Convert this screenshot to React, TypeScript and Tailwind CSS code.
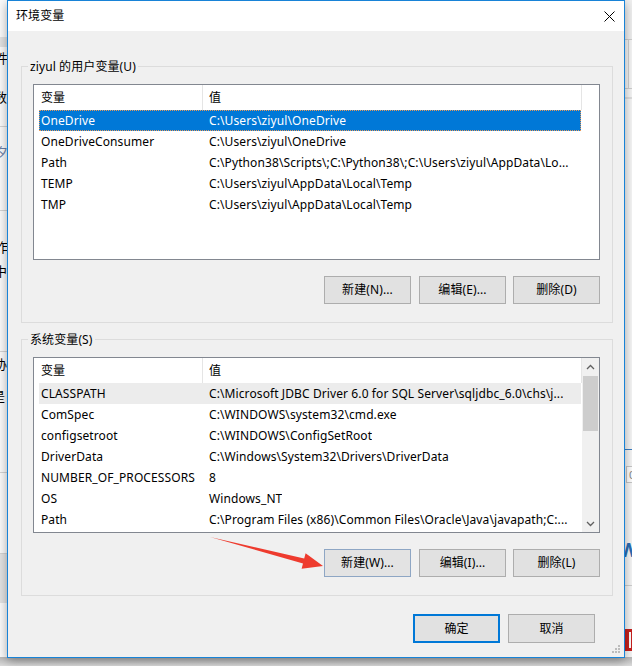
import React from "react";

type Row = { name: string; value: string };

const userRows: Row[] = [
  { name: "OneDrive", value: "C:\\Users\\ziyul\\OneDrive" },
  { name: "OneDriveConsumer", value: "C:\\Users\\ziyul\\OneDrive" },
  { name: "Path", value: "C:\\Python38\\Scripts\\;C:\\Python38\\;C:\\Users\\ziyul\\AppData\\Lo..." },
  { name: "TEMP", value: "C:\\Users\\ziyul\\AppData\\Local\\Temp" },
  { name: "TMP", value: "C:\\Users\\ziyul\\AppData\\Local\\Temp" },
];

const sysRows: Row[] = [
  { name: "CLASSPATH", value: "C:\\Microsoft JDBC Driver 6.0 for SQL Server\\sqljdbc_6.0\\chs\\j..." },
  { name: "ComSpec", value: "C:\\WINDOWS\\system32\\cmd.exe" },
  { name: "configsetroot", value: "C:\\WINDOWS\\ConfigSetRoot" },
  { name: "DriverData", value: "C:\\Windows\\System32\\Drivers\\DriverData" },
  { name: "NUMBER_OF_PROCESSORS", value: "8" },
  { name: "OS", value: "Windows_NT" },
  { name: "Path", value: "C:\\Program Files (x86)\\Common Files\\Oracle\\Java\\javapath;C:..." },
];

function Chevron({ up }: { up: boolean }) {
  return (
    <svg width="9" height="6" viewBox="0 0 9 6">
      <path
        d={up ? "M1 5 L4.5 1.5 L8 5" : "M1 1 L4.5 4.5 L8 1"}
        fill="none"
        stroke="#606060"
        strokeWidth="1.3"
      />
    </svg>
  );
}

function ListView({
  rows,
  mode,
  scroll,
}: {
  rows: Row[];
  mode: "selected" | "gray";
  scroll: boolean;
}) {
  return (
    <div className="w-[567px] h-[176px] border border-[#828790] bg-white flex">
      <div className="flex-1 flex flex-col min-w-0">
        <div className="h-[25px] flex shrink-0">
          <div className="w-[169px] pl-[7px] border-r border-[#e5e5e5] flex items-center">变量</div>
          <div className="w-[379px] pl-[6px] border-r border-[#e5e5e5] flex items-center">值</div>
        </div>
        <div className="pl-[5px] flex flex-col">
          {rows.map((r, i) => {
            let cls = "w-[542px] h-[21px] flex items-center whitespace-nowrap pt-[1px]";
            if (i === 0 && mode === "selected") {
              cls =
                "w-[542px] h-[21px] flex items-center whitespace-nowrap pt-[1px] bg-[#0078d7] text-white outline-1 outline-dotted -outline-offset-1 outline-[#e89a5a]";
            } else if (i === 0 && mode === "gray") {
              cls = "w-[542px] h-[21px] flex items-center whitespace-nowrap pt-[1px] bg-[#ececec]";
            }
            return (
              <div key={i} className={cls}>
                <div className="w-[164px] pl-[2px] shrink-0">{r.name}</div>
                <div className="pl-[6px] overflow-hidden">{r.value}</div>
              </div>
            );
          })}
        </div>
      </div>
      {scroll && (
        <div className="w-[17px] h-full bg-[#f0f0f0] flex flex-col shrink-0">
          <div className="h-[17px] flex items-center justify-center">
            <Chevron up={true} />
          </div>
          <div className="flex-1 pt-[1px] px-[1px]">
            <div className="h-[55px] w-[15px] bg-[#cdcdcd]" />
          </div>
          <div className="h-[17px] flex items-center justify-center">
            <Chevron up={false} />
          </div>
        </div>
      )}
    </div>
  );
}

const btnCls =
  "w-[87px] h-[28px] border border-[#adadad] bg-[#e1e1e1] flex items-center justify-center";

function Group({
  label,
  rows,
  mode,
  scroll,
  buttons,
  firstBtnCls,
}: {
  label: string;
  rows: Row[];
  mode: "selected" | "gray";
  scroll: boolean;
  buttons: string[];
  firstBtnCls: string;
}) {
  return (
    <div className="relative h-[257px] border border-[#dcdcdc] pt-[17px] pl-[11px] pr-[12px] flex flex-col">
      <div className="absolute -top-[9px] left-[6px] px-[2px] bg-[#f0f0f0] leading-[18px]">{label}</div>
      <ListView rows={rows} mode={mode} scroll={scroll} />
      <div className="mt-[16px] flex justify-end">
        <div className={firstBtnCls}>{buttons[0]}</div>
        <div className={"ml-[8px] " + btnCls}>{buttons[1]}</div>
        <div className={"ml-[7px] " + btnCls}>{buttons[2]}</div>
      </div>
    </div>
  );
}

function LeftSliver() {
  return (
    <div className="w-[7px] h-[657px] bg-[#fbfbfb] flex flex-col overflow-visible text-[13px] leading-[16px] shrink-0">
      <div className="h-[37px] shrink-0" />
      <div className="h-[10px] bg-[#e2e2e2] shrink-0" />
      <div className="h-[80px] border-b border-[#d4d4d4] shrink-0 pt-[3px] -ml-[5px] whitespace-nowrap">
        <div>件</div>
        <div className="mt-[23px] -ml-[1px]">数</div>
      </div>
      <div className="h-[84px] border-b border-[#d4d4d4] shrink-0 pt-[17px] -ml-[5px] text-[#6a7fa8]">夕</div>
      <div className="h-[141px] border-b border-[#d4d4d4] shrink-0 pt-[28px] -ml-[5px]">
        <div>作</div>
        <div className="mt-[8px] -ml-[1px]">中</div>
      </div>
      <div className="h-[121px] border-b border-[#d4d4d4] shrink-0 pt-[4px] -ml-[6px]">
        <div>协</div>
        <div className="mt-[16px] -ml-[2px]">是</div>
      </div>
      <div className="h-[81px] border-b border-[#d4d4d4] shrink-0" />
      <div className="h-[49px] bg-[#e4e4e4] shrink-0" />
      <div className="flex-1" />
    </div>
  );
}

function RightSliver() {
  return (
    <div className="w-[7px] h-[657px] bg-[#f7f7f7] flex flex-col shrink-0">
      <div className="h-[40px] bg-[#f0f0f0] shrink-0 border-b border-[#d0d0d0]" />
      <div className="h-[48px] shrink-0 flex">
        <div className="w-[4px] border-r border-[#d0d0d0]" />
      </div>
      <div className="h-px bg-[#d0d0d0] shrink-0" />
      <div className="h-[10px] shrink-0 border-b-2 border-[#e0e0e0]" />
      <div className="h-[351px] shrink-0 border-b border-[#3b7fc4]" />
      <div className="h-[16px] shrink-0" />
      <div className="h-[17px] w-[10px] ml-[1px] shrink-0 border border-[#c8c8c8] bg-white text-[11px] leading-[15px] text-[#888] pl-[2px]">0</div>
      <div className="h-[103px] shrink-0 border-b border-[#d0d0d0] pt-[56px] -ml-[6px] text-[20px] leading-[22px] font-bold text-[#2a6db5] whitespace-nowrap">
        W
      </div>
      <div className="h-[43px] shrink-0" />
      <div className="h-[22px] shrink-0 bg-[#c9211e] pl-[4px] pt-[3px]">
        <div className="w-[2px] h-[16px] bg-white" />
      </div>
      <div className="flex-1" />
    </div>
  );
}

export default function App() {
  return (
    <div className="relative w-[632px] h-[666px] overflow-hidden bg-[#f4f4f4] text-[12px] tracking-[0.1px] text-black font-['Noto_Sans','Noto_Sans_CJK_SC',sans-serif]">
      {/* desktop: background window edges and shadow */}
      <div className="flex flex-col">
        <div className="flex justify-between">
          <LeftSliver />
          <RightSliver />
        </div>
        <div className="h-[9px] bg-gradient-to-b from-[#b8b8b8] to-[#dcdcdc]" />
      </div>

      {/* dialog window on the desktop */}
      <div className="absolute left-[7px] top-0 w-[618px] h-[658px] border border-[#1883d7] bg-[#f0f0f0] flex flex-col shadow-[0_3px_10px_rgba(0,0,0,0.35)]">
        <div className="h-[30px] bg-white flex items-center justify-between pl-[8px] pr-[9px] shrink-0">
          <span className="text-[12px]">环境变量</span>
          <svg width="11" height="11" viewBox="0 0 11 11">
            <path d="M0.5 0.5 L10.5 10.5 M10.5 0.5 L0.5 10.5" stroke="#000" strokeWidth="1" />
          </svg>
        </div>
        <div className="flex flex-col pl-[13px] pr-[11px] pt-[35px]">
          <Group
            label="ziyul 的用户变量(U)"
            rows={userRows}
            mode="selected"
            scroll={false}
            buttons={["新建(N)...", "编辑(E)...", "删除(D)"]}
            firstBtnCls={btnCls}
          />
          <div className="mt-[16px]">
            <Group
              label="系统变量(S)"
              rows={sysRows}
              mode="gray"
              scroll={true}
              buttons={["新建(W)...", "编辑(I)...", "删除(L)"]}
              firstBtnCls="w-[87px] h-[28px] border border-[#8ea6c4] bg-[#e3e3e3] flex items-center justify-center"
            />
          </div>
          <div className="mt-[18px] flex justify-end pr-[18px] gap-[8px]">
            <div className="w-[87px] h-[29px] border-2 border-[#0078d7] bg-[#e1e1e1] flex items-center justify-center">
              确定
            </div>
            <div className="w-[87px] h-[29px] border border-[#adadad] bg-[#e1e1e1] flex items-center justify-center">
              取消
            </div>
          </div>
        </div>
        <div className="flex-1 flex items-end justify-end pr-[3px] pb-[3px]">
          <svg width="10" height="10" viewBox="0 0 10 10">
            <rect x="7" y="1" width="2" height="2" fill="#bcbcbc" />
            <rect x="4" y="4" width="2" height="2" fill="#bcbcbc" />
            <rect x="7" y="4" width="2" height="2" fill="#bcbcbc" />
            <rect x="1" y="7" width="2" height="2" fill="#bcbcbc" />
            <rect x="4" y="7" width="2" height="2" fill="#bcbcbc" />
            <rect x="7" y="7" width="2" height="2" fill="#bcbcbc" />
          </svg>
        </div>
      </div>

      {/* red annotation arrow drawn over the dialog */}
      <svg className="absolute left-0 top-0 pointer-events-none" width="632" height="666">
        <polygon
          points="210,537 304.2,558.6 305.6,553.2 323,566 301.6,568.8 303,563.4"
          fill="#ee3b2e"
        />
      </svg>
    </div>
  );
}
